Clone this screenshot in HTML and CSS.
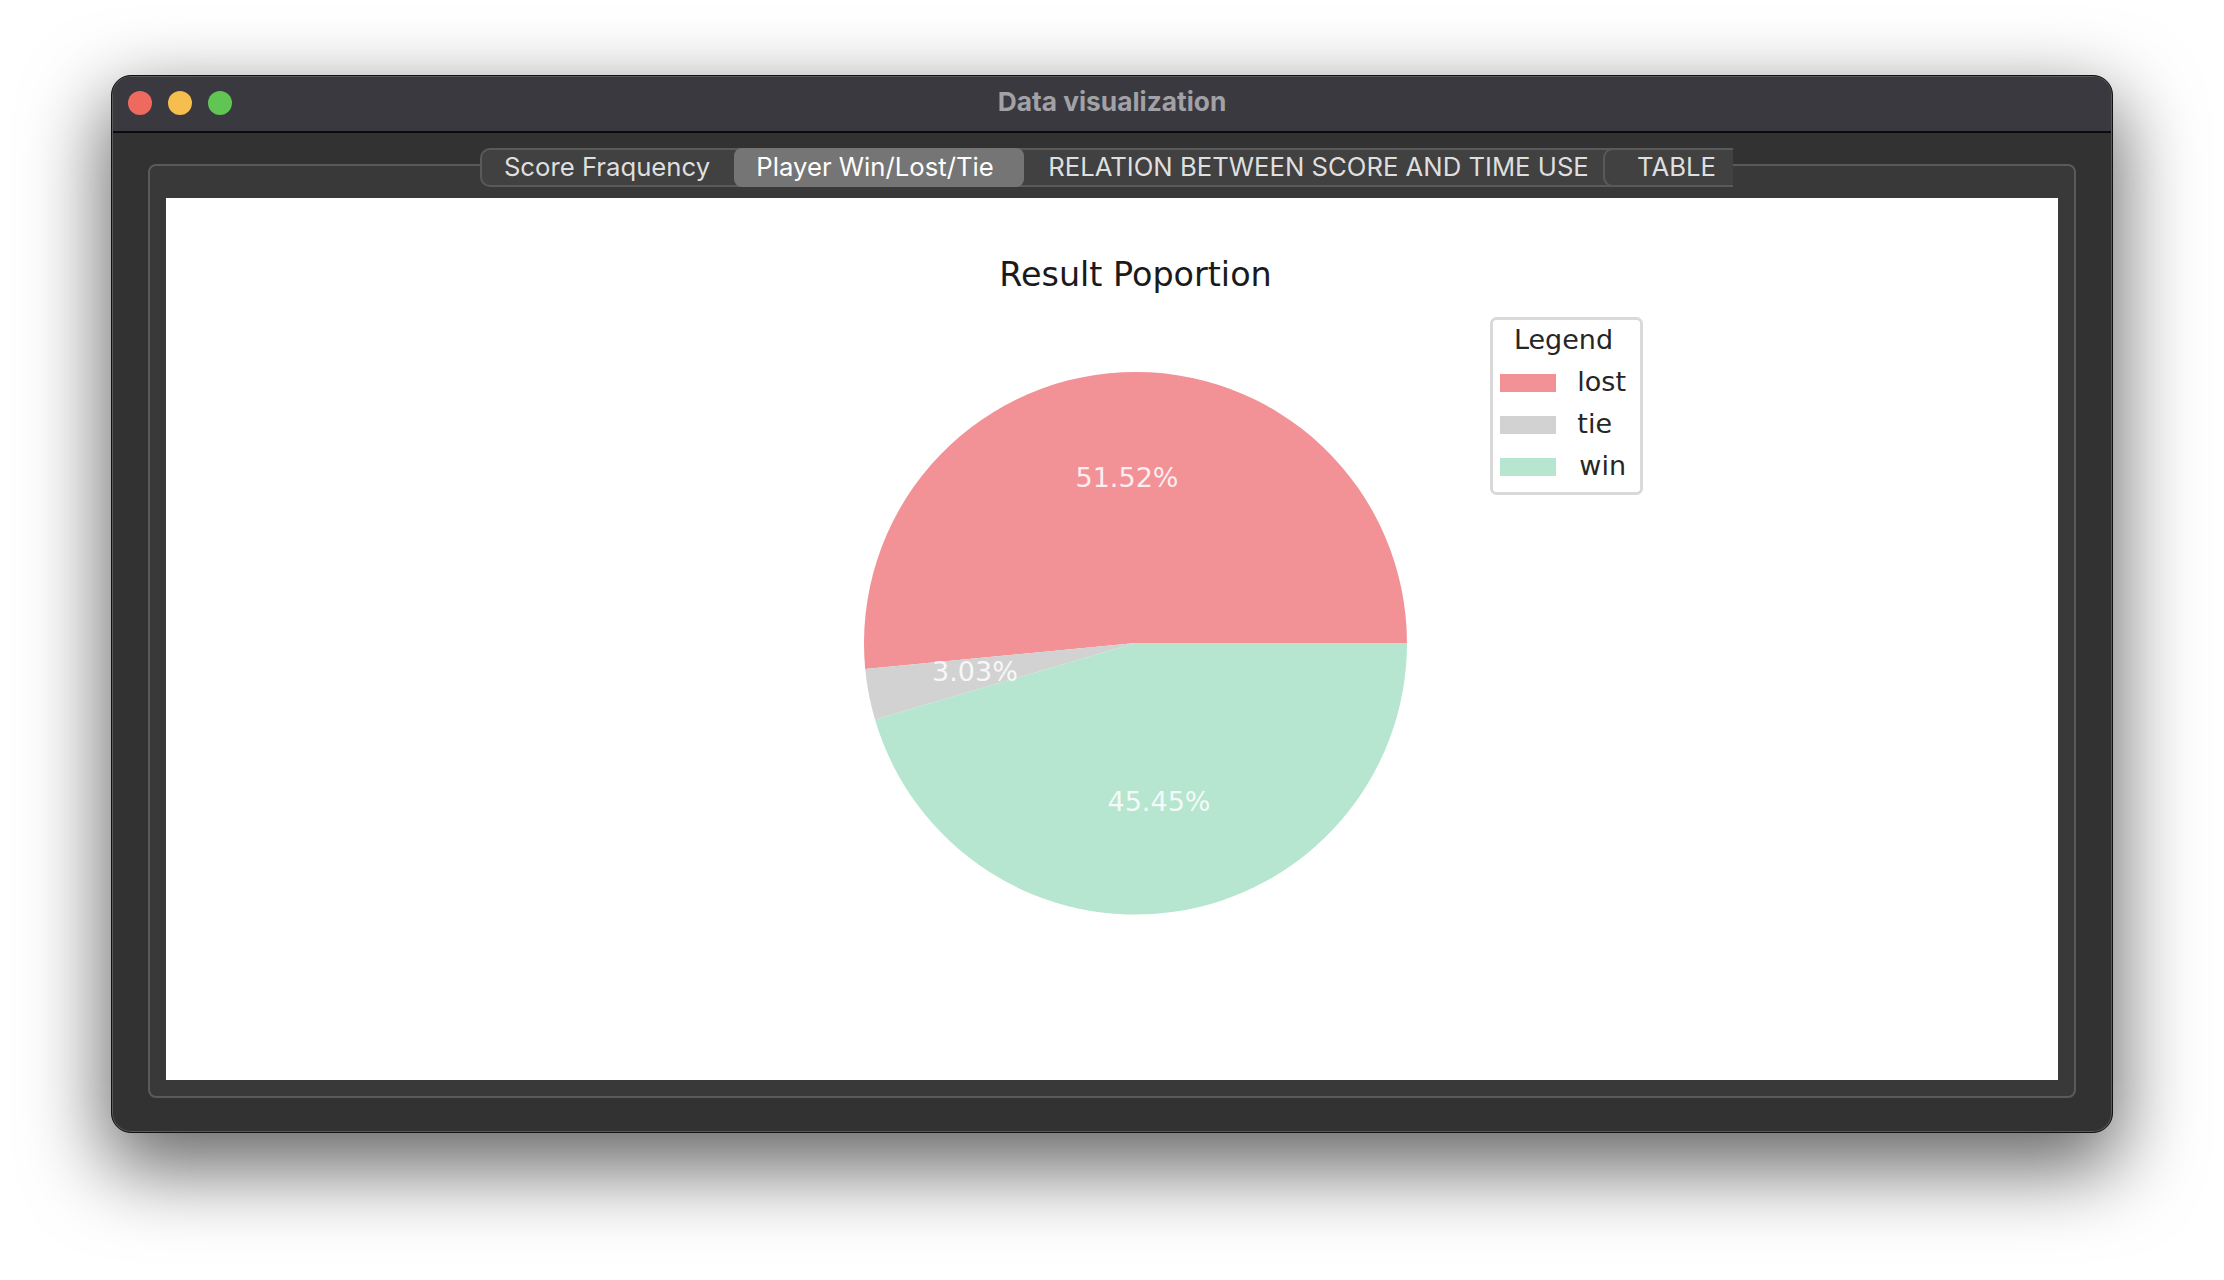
FILE: index.html
```html
<!DOCTYPE html>
<html>
<head>
    <meta charset="UTF-8"/>
    <title>Data visualization</title>
    <link rel="stylesheet" href="styles.css">
</head>
<body>
<div class="window">
    <div class="titlebar">
        <div class="lights">
            <span class="light red"></span>
            <span class="light yellow"></span>
            <span class="light green"></span>
        </div>
        <span class="title">Data visualization</span>
    </div>

    <div class="content">
        <div class="tabs">
            <span class="tab first">Score Fraquency</span>
            <span class="tab active">Player Win/Lost/Tie</span>
            <span class="tab third">RELATION BETWEEN SCORE AND TIME USE</span>
            <span class="tab last">TABLE</span>
        </div>
        <div class="pane">
            <div class="canvas">
                <svg class="chart" width="1892" height="882" viewBox="0 0 1892 882">
                    <text class="chart-title" x="969.5" y="88" text-anchor="middle">Result Poportion</text>

                    <!-- slices: centre 969.5,445 r 271.5 -->
                    <path fill="#f29297" d="M969.5 445 L1241 445 A271.5 271.5 0 1 0 699.2 470.9 Z"/>
                    <path fill="#d2d2d2" d="M969.5 445 L699.2 470.9 A271.5 271.5 0 0 0 709 521.6 Z"/>
                    <path fill="#b6e5d0" d="M969.5 445 L709 521.6 A271.5 271.5 0 0 0 1241 445 Z"/>

                    <text class="pct" x="961" y="289" text-anchor="middle">51.52%</text>
                    <text class="pct" x="809" y="483" text-anchor="middle">3.03%</text>
                    <text class="pct" x="993" y="613" text-anchor="middle">45.45%</text>

                    <rect class="legend-box" x="1325.5" y="120.5" width="150" height="175" rx="5"/>
                    <text class="legend-text" x="1397.5" y="151" text-anchor="middle">Legend</text>
                    <rect fill="#f29297" x="1334" y="176" width="56" height="18"/>
                    <text class="legend-text" x="1460" y="193" text-anchor="end">lost</text>
                    <rect fill="#d2d2d2" x="1334" y="218" width="56" height="18"/>
                    <text class="legend-text" x="1446" y="235" text-anchor="end">tie</text>
                    <rect fill="#b6e5d0" x="1334" y="260" width="56" height="18"/>
                    <text class="legend-text" x="1460" y="277" text-anchor="end">win</text>
                </svg>
            </div>
        </div>
    </div>
</div>
</body>
</html>
```
FILE: styles.css
```css
html, body {
    margin: 0;
    padding: 0;
    height: 100%;
    background: #ffffff;
    overflow: hidden;
}

body {
    display: flex;
    align-items: flex-start;
    justify-content: flex-start;
    padding: 75px 0 0 111px;
    box-sizing: border-box;
}

.window {
    width: 2002px;
    height: 1058px;
    box-sizing: border-box;
    display: flex;
    flex-direction: column;
    background: #323232;
    border-radius: 20px;
    border: 1px solid #111111;
    box-shadow: inset 0 0 0 1px #5a5a5a, 0 30px 80px 6px rgba(0, 0, 0, 0.6);
    overflow: hidden;
}

.titlebar {
    position: relative;
    flex: none;
    height: 56px;
    margin: 1px 1px 0;
    display: flex;
    align-items: center;
    justify-content: center;
    background: #3a3940;
    border-bottom: 2px solid #0c0c0c;
    border-radius: 18px 18px 0 0;
    box-sizing: border-box;
}

.lights {
    position: absolute;
    left: 15px;
    top: 14px;
    display: flex;
    gap: 16px;
}

.light {
    display: block;
    width: 24px;
    height: 24px;
    border-radius: 50%;
}

.red { background: #ee6a5f; }
.yellow { background: #f5be4f; }
.green { background: #61c554; }

.title {
    font-family: Inter, "Liberation Sans", sans-serif;
    font-size: 26.3px;
    font-weight: 700;
    color: #a1a1a6;
    margin-top: -5px;
}

.content {
    position: relative;
    flex: 1;
    padding: 31px 36px 34px 36px;
    display: flex;
}

.tabs {
    position: absolute;
    left: 368px;
    top: 15px;
    z-index: 2;
    display: flex;
    height: 39px;
    font-family: Inter, "Liberation Sans", sans-serif;
    font-size: 25.7px;
    color: #dfdfdf;
}

.tab {
    box-sizing: border-box;
    height: 39px;
    display: flex;
    align-items: center;
    justify-content: center;
    background: #414141;
    border-top: 2px solid #5a5a5a;
    border-bottom: 2px solid #5a5a5a;
    padding-bottom: 2px;
}

/* neighbours run 10px under the selected tab so its corners show tab colour */
.tab.first {
    width: 264px;
    padding-right: 12px;
    border-left: 2px solid #5a5a5a;
    border-radius: 10px 0 0 10px;
}

.tab.active {
    position: relative;
    z-index: 1;
    width: 290px;
    margin-left: -10px;
    padding-right: 8px;
    color: #ffffff;
    background: #757575;
    border: 0;
    border-radius: 8px;
}

.tab.third {
    width: 599px;
    margin-left: -10px;
    padding-left: 10px;
}

.tab.last {
    position: relative;
    width: 130px;
    margin-left: -10px;
    padding-left: 15px;
    border-left: 2px solid #5a5a5a;
    border-radius: 10px 0 0 10px;
}

.pane {
    flex: 1;
    box-sizing: border-box;
    padding: 32px 16px 16px 16px;
    background: #393939;
    border: 2px solid #5a5a5a;
    border-radius: 8px;
}

.canvas {
    width: 100%;
    height: 100%;
    background: #ffffff;
    overflow: hidden;
}

.chart {
    display: block;
    font-family: "DejaVu Sans", sans-serif;
}

.chart-title {
    font-size: 33.4px;
    fill: #1a1a1a;
}

.pct {
    font-size: 27px;
    fill: #ffffff;
    fill-opacity: 0.85;
}

.legend-box {
    fill: #ffffff;
    stroke: #d9d9d9;
    stroke-width: 3;
}

.legend-text {
    font-size: 27px;
    fill: #262626;
}
```
